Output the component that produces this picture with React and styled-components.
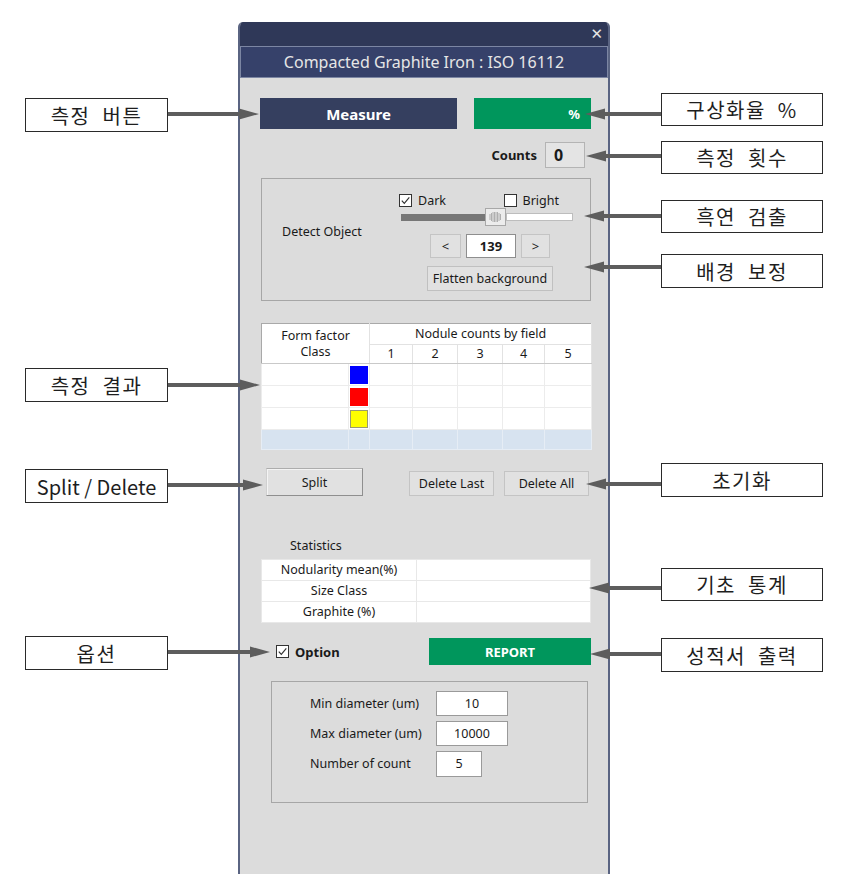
import React from 'react';
import styled, { createGlobalStyle } from 'styled-components';

const Global = createGlobalStyle`
  html, body { margin: 0; padding: 0; background: #ffffff; }
  body { font-family: "Noto Sans", "Liberation Sans", sans-serif; color: #1a1a1a; }
`;

const Page = styled.div`
  position: relative;
  width: 855px;
  height: 892px;
  overflow: hidden;
  box-sizing: border-box;
  padding: 22px 0 0 238px;
`;

const Panel = styled.div`
  width: 372px;
  height: 852px;
  box-sizing: border-box;
  background: #dcdcdc;
  border-left: 2px solid #5a6482;
  border-right: 2px solid #5a6482;
  border-radius: 5px 5px 0 0;
  display: flex;
  flex-direction: column;
  overflow: hidden;
`;

const TitleBar = styled.div`
  height: 24px;
  background: #2f3858;
  display: flex;
  align-items: center;
  justify-content: flex-end;
  padding-right: 5px;
  color: #e4e4e4;
  font-size: 15px;
  font-family: "DejaVu Sans", sans-serif;
`;

const Header = styled.div`
  height: 32px;
  box-sizing: border-box;
  background: #36416a;
  border: 1px solid #7c86a3;
  color: #e6e6e6;
  font-size: 16px;
  display: flex;
  align-items: center;
  justify-content: center;
`;

const Body = styled.div`
  display: flex;
  flex-direction: column;
  padding: 0 17px 0 21px;
  font-size: 12.5px;
`;

const MeasureRow = styled.div`
  margin-top: 20px;
  height: 31px;
  display: flex;
  gap: 17px;
`;

const MeasureButton = styled.div`
  width: 197px;
  margin-left: -1px;
  background: #353f5f;
  color: #ffffff;
  font-weight: 700;
  font-size: 15px;
  display: flex;
  align-items: center;
  justify-content: center;
`;

const GreenBox = styled.div`
  flex: 1;
  background: #00965c;
  color: #ffffff;
  font-weight: 700;
  font-size: 13px;
  display: flex;
  align-items: center;
  justify-content: ${p => p.$justify || 'flex-end'};
  padding-right: ${p => p.$pr || 0}px;
`;

const CountsRow = styled.div`
  margin-top: 13px;
  height: 26px;
  display: flex;
  align-items: center;
  justify-content: flex-end;
  gap: 8px;
  padding-right: 6px;
  font-weight: 700;
  font-size: 13px;
`;

const CountBox = styled.div`
  width: 40px;
  height: 26px;
  box-sizing: border-box;
  background: #e4e4e4;
  border: 1px solid #b4b4b4;
  font-size: 16px;
  font-weight: 700;
  display: flex;
  align-items: center;
  padding-left: 8px;
`;

const GroupBox = styled.div`
  box-sizing: border-box;
  border: 1px solid #a6a6a6;
  margin-top: ${p => p.$mt}px;
  height: ${p => p.$h}px;
`;

const DetectGroup = styled(GroupBox)`
  display: grid;
  grid-template-columns: 137px 1fr;
`;

const DetectLabel = styled.div`
  align-self: center;
  margin-bottom: 16px;
  padding-left: 20px;
`;

const DetectControls = styled.div`
  width: 182px;
  padding-top: 14px;
  display: flex;
  flex-direction: column;
`;

const CheckRow = styled.div`
  width: 160px;
  height: 14px;
  display: flex;
  justify-content: space-between;
  align-items: center;
`;

const CheckItem = styled.label`
  display: flex;
  align-items: center;
  gap: ${p => p.$gap || 6}px;
  font-size: ${p => p.$size || 12.5}px;
  font-weight: ${p => (p.$bold ? 700 : 400)};
`;

const CheckSquare = styled.span`
  width: 13px;
  height: 13px;
  box-sizing: border-box;
  border: 1px solid #333;
  background: #fff;
  display: flex;
  align-items: center;
  justify-content: center;
`;

const Slider = styled.div`
  margin: 1px 0 0 2px;
  width: 172px;
  height: 18px;
  display: flex;
  align-items: center;
`;

const SliderFill = styled.div`
  width: 84px;
  height: 7px;
  background: #777777;
`;

const SliderRest = styled.div`
  flex: 1;
  height: 8px;
  box-sizing: border-box;
  background: #ffffff;
  border: 1px solid #bdbdbd;
`;

const Thumb = styled.div`
  width: 21px;
  height: 18px;
  box-sizing: border-box;
  background: #ececec;
  border: 1px solid #a8a8a8;
  display: flex;
  align-items: center;
  justify-content: center;
`;

const SpinRow = styled.div`
  margin-top: 8px;
  display: flex;
  gap: 5px;
  justify-content: center;
`;

const Button = styled.div`
  box-sizing: border-box;
  width: ${p => p.$w}px;
  height: ${p => p.$h}px;
  background: #e1e1e1;
  border: 1px solid ${p => p.$border || '#c4c4c4'};
  font-size: ${p => p.$size || 12.5}px;
  display: flex;
  align-items: center;
  justify-content: center;
  color: #1a1a1a;
`;

const ValueBox = styled.div`
  box-sizing: border-box;
  width: ${p => p.$w}px;
  height: ${p => p.$h}px;
  background: #ffffff;
  border: 1px solid ${p => p.$border || '#9a9a9a'};
  font-size: ${p => p.$size || 12.5}px;
  font-weight: ${p => (p.$bold ? 700 : 400)};
  display: flex;
  align-items: center;
  justify-content: center;
`;

const FlattenRow = styled.div`
  margin-top: 8px;
  display: flex;
  justify-content: center;
`;

const Table = styled.table`
  margin-top: ${p => p.$mt}px;
  width: 330px;
  border-collapse: collapse;
  table-layout: fixed;
  border: 1px solid #a9a9a9;
  background: #ffffff;
  font-size: 12.5px;
`;

const HeadCell = styled.th`
  font-weight: 400;
  text-align: center;
  line-height: 16px;
  height: ${p => p.$h}px;
  padding: 0;
  border-right: 1px solid #e2e2e2;
  border-bottom: 1px solid ${p => p.$bb || '#e2e2e2'};
`;

const Cell = styled.td`
  height: 19px;
  padding: 0;
  border: 1px solid ${p => (p.$shade ? '#e6edf5' : '#ececec')};
  background: ${p => (p.$shade ? '#d7e3f0' : '#ffffff')};
`;

const SwatchCell = styled(Cell)`
  padding: 1px;
`;

const Swatch = styled.div`
  height: 18px;
  box-sizing: border-box;
  background: ${p => p.$color};
  border: 1px solid ${p => p.$edge || p.$color};
`;

const ButtonRow = styled.div`
  margin-top: 18px;
  height: 28px;
  display: flex;
  align-items: flex-end;
  padding-right: 2px;
`;

const SplitButton = styled(Button)`
  margin-left: 5px;
  margin-right: auto;
  border-color: #adadad #8f8f8f #8f8f8f #d0d0d0;
  box-shadow: inset 1px 1px 0 #f4f4f4;
`;

const DeleteGroup = styled.div`
  display: flex;
  gap: 10px;
`;

const StatsLabel = styled.div`
  margin-top: 41px;
  padding-left: 29px;
  line-height: 18px;
`;

const StatCell = styled.td`
  height: 20px;
  padding: 0;
  text-align: center;
  border: 1px solid #e8e8e8;
  line-height: 16px;
`;

const OptionRow = styled.div`
  margin-top: 15px;
  height: 27px;
  display: flex;
  align-items: center;
`;

const OptionCheck = styled.div`
  margin-left: 15px;
  margin-right: auto;
`;

const ReportButton = styled(GreenBox)`
  flex: none;
  width: 162px;
  height: 27px;
`;

const OptionGroup = styled(GroupBox)`
  margin-left: 10px;
  margin-right: 3px;
  padding: 9px 0 0 38px;
  display: grid;
  grid-template-columns: 126px auto;
  grid-auto-rows: 25px;
  row-gap: 5px;
  align-items: center;
  justify-items: start;
`;

/* ---------- annotation callouts ---------- */

const Callout = styled.div`
  position: absolute;
  left: ${p => p.$x}px;
  top: ${p => p.$y}px;
  width: ${p => p.$w}px;
  height: ${p => p.$h}px;
  box-sizing: border-box;
  border: 1.5px solid #2a2a2a;
  background: #ffffff;
  display: flex;
  align-items: center;
  justify-content: center;
  font-family: "Noto Sans CJK KR", "Noto Sans", sans-serif;
  font-size: 20px;
  letter-spacing: ${p => (p.$latin ? 0 : 1.5)}px;
  color: #1e1e1e;
  white-space: pre;
`;

const ArrowSvg = styled.svg`
  position: absolute;
  left: ${p => p.$x}px;
  top: ${p => p.$y - 7}px;
  overflow: visible;
`;

function Arrow({ from, to, y }) {
  const w = Math.abs(to - from);
  const right = to > from;
  const left = Math.min(from, to);
  return (
    <ArrowSvg $x={left} $y={y} width={w} height={14} viewBox={`0 0 ${w} 14`}>
      {right ? (
        <>
          <line x1={0} y1={7} x2={w - 16} y2={7} stroke="#5d5d5d" strokeWidth="4" />
          <polygon points={`${w},7 ${w - 20},1.5 ${w - 20},12.5`} fill="#5d5d5d" />
        </>
      ) : (
        <>
          <line x1={16} y1={7} x2={w} y2={7} stroke="#5d5d5d" strokeWidth="4" />
          <polygon points={`0,7 20,1.5 20,12.5`} fill="#5d5d5d" />
        </>
      )}
    </ArrowSvg>
  );
}

const leftNotes = [
  { text: '측정  버튼', y: 98, h: 34, arrowY: 114, tip: 259 },
  { text: '측정  결과', y: 368, h: 34, arrowY: 385, tip: 260 },
  { text: 'Split / Delete', y: 469, h: 34, arrowY: 485, tip: 263, latin: true },
  { text: '옵션', y: 636, h: 34, arrowY: 652, tip: 270 },
];

const rightNotes = [
  { text: '구상화율  %', y: 93, h: 33, arrowY: 114, tip: 585 },
  { text: '측정  횟수', y: 141, h: 33, arrowY: 156, tip: 586 },
  { text: '흑연  검출', y: 200, h: 33, arrowY: 216, tip: 584 },
  { text: '배경  보정', y: 254, h: 34, arrowY: 267, tip: 584 },
  { text: '초기화', y: 463, h: 34, arrowY: 484, tip: 586 },
  { text: '기초  통계', y: 568, h: 33, arrowY: 588, tip: 589 },
  { text: '성적서  출력', y: 638, h: 34, arrowY: 654, tip: 590 },
];

function Check({ checked }) {
  return (
    <CheckSquare>
      {checked && (
        <svg width="11" height="11" viewBox="0 0 11 11">
          <path d="M1.8 5.6 L4.3 8.3 L9.3 2.4" fill="none" stroke="#333" strokeWidth="1.2" />
        </svg>
      )}
    </CheckSquare>
  );
}

function Grip() {
  const xs = [4, 5.5, 7, 8.5, 10, 11.5, 13, 14.5];
  const hs = [6, 8, 10, 10, 10, 10, 8, 6];
  return (
    <svg width="19" height="16" viewBox="0 0 19 16">
      {xs.map((x, i) => (
        <line key={i} x1={x} x2={x} y1={8 - hs[i] / 2} y2={8 + hs[i] / 2} stroke="#a0a0a0" strokeWidth="0.8" />
      ))}
    </svg>
  );
}

export default function App() {
  const swatches = [
    { color: '#0000ff' },
    { color: '#ff0000' },
    { color: '#ffff00', edge: '#9a9a70' },
  ];
  return (
    <>
      <Global />
      <Page>
        <Panel>
          <TitleBar>✕</TitleBar>
          <Header>Compacted Graphite Iron : ISO 16112</Header>
          <Body>
            <MeasureRow>
              <MeasureButton>Measure</MeasureButton>
              <GreenBox $pr={11}>%</GreenBox>
            </MeasureRow>

            <CountsRow>
              <span>Counts</span>
              <CountBox>0</CountBox>
            </CountsRow>

            <DetectGroup $mt={10} $h={123}>
              <DetectLabel>Detect Object</DetectLabel>
              <DetectControls>
                <CheckRow>
                  <CheckItem>
                    <Check checked />
                    Dark
                  </CheckItem>
                  <CheckItem>
                    <Check />
                    Bright
                  </CheckItem>
                </CheckRow>
                <Slider>
                  <SliderFill />
                  <Thumb>
                    <Grip />
                  </Thumb>
                  <SliderRest />
                </Slider>
                <SpinRow>
                  <Button $w={31} $h={24} $size={13}>&lt;</Button>
                  <ValueBox $w={50} $h={24} $bold $size={13} $border="#8e8e8e">139</ValueBox>
                  <Button $w={29} $h={24} $size={13}>&gt;</Button>
                </SpinRow>
                <FlattenRow>
                  <Button $w={126} $h={25} $border="#c0c0c0">Flatten background</Button>
                </FlattenRow>
              </DetectControls>
            </DetectGroup>

            <Table $mt={22}>
              <colgroup>
                <col style={{ width: 87 }} />
                <col style={{ width: 21 }} />
                <col style={{ width: 43 }} />
                <col style={{ width: 45 }} />
                <col style={{ width: 45 }} />
                <col style={{ width: 42 }} />
                <col style={{ width: 47 }} />
              </colgroup>
              <thead>
                <tr>
                  <HeadCell colSpan={2} rowSpan={2} $h={39} $bb="#c9c9c9">
                    Form factor
                    <br />
                    Class
                  </HeadCell>
                  <HeadCell colSpan={5} $h={20}>Nodule counts by field</HeadCell>
                </tr>
                <tr>
                  {[1, 2, 3, 4, 5].map(n => (
                    <HeadCell key={n} $h={18} $bb="#c9c9c9">{n}</HeadCell>
                  ))}
                </tr>
              </thead>
              <tbody>
                {swatches.map((s, i) => (
                  <tr key={i}>
                    <Cell />
                    <SwatchCell>
                      <Swatch $color={s.color} $edge={s.edge} />
                    </SwatchCell>
                    {[0, 1, 2, 3, 4].map(c => (
                      <Cell key={c} />
                    ))}
                  </tr>
                ))}
                <tr>
                  {[0, 1, 2, 3, 4, 5, 6].map(c => (
                    <Cell key={c} $shade />
                  ))}
                </tr>
              </tbody>
            </Table>

            <ButtonRow>
              <SplitButton $w={97} $h={28}>Split</SplitButton>
              <DeleteGroup>
                <Button $w={85} $h={25} $border="#c4c4c4">Delete Last</Button>
                <Button $w={85} $h={25} $border="#c4c4c4">Delete All</Button>
              </DeleteGroup>
            </ButtonRow>

            <StatsLabel>Statistics</StatsLabel>
            <Table $mt={4}>
              <colgroup>
                <col style={{ width: 155 }} />
                <col />
              </colgroup>
              <tbody>
                {['Nodularity mean(%)', 'Size Class', 'Graphite (%)'].map(t => (
                  <tr key={t}>
                    <StatCell>{t}</StatCell>
                    <StatCell />
                  </tr>
                ))}
              </tbody>
            </Table>

            <OptionRow>
              <OptionCheck>
                <CheckItem $bold $size={13} $gap={6}>
                  <Check checked />
                  Option
                </CheckItem>
              </OptionCheck>
              <ReportButton $justify="center">REPORT</ReportButton>
            </OptionRow>

            <OptionGroup $mt={16} $h={122}>
              <span>Min diameter (um)</span>
              <ValueBox $w={72} $h={25}>10</ValueBox>
              <span>Max diameter (um)</span>
              <ValueBox $w={72} $h={25}>10000</ValueBox>
              <span>Number of count</span>
              <ValueBox $w={46} $h={26}>5</ValueBox>
            </OptionGroup>
          </Body>
        </Panel>

        {leftNotes.map(n => (
          <React.Fragment key={n.text}>
            <Callout $x={25} $y={n.y} $w={143} $h={n.h} $latin={n.latin}>{n.text}</Callout>
            <Arrow from={168} to={n.tip} y={n.arrowY} />
          </React.Fragment>
        ))}
        {rightNotes.map(n => (
          <React.Fragment key={n.text}>
            <Callout $x={661} $y={n.y} $w={162} $h={n.h}>{n.text}</Callout>
            <Arrow from={661} to={n.tip} y={n.arrowY} />
          </React.Fragment>
        ))}
      </Page>
    </>
  );
}
